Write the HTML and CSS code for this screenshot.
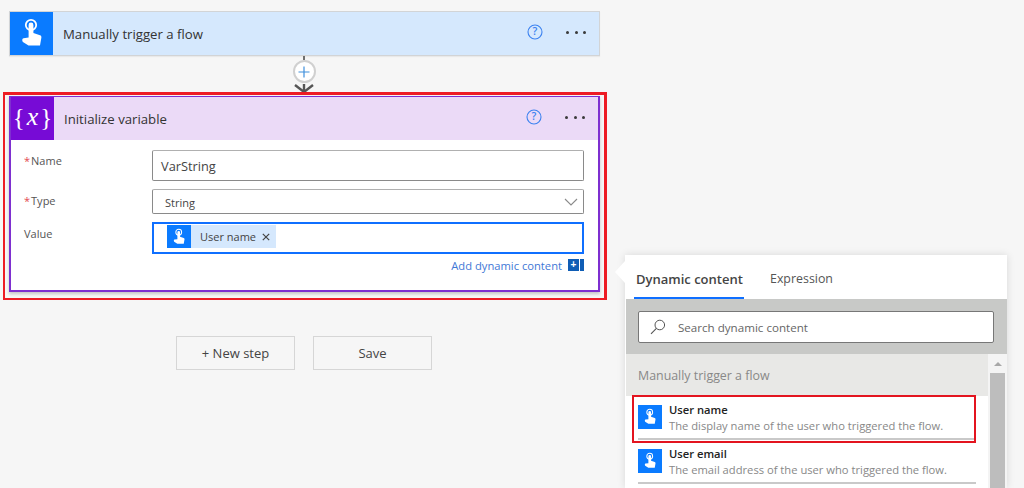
FILE: index.html
```html
<!DOCTYPE html>
<html lang="en">
<head>
<meta charset="utf-8">
<title>Initialize variable</title>
<link rel="stylesheet" href="styles.css">
</head>
<body>
<svg class="defs" width="0" height="0" aria-hidden="true">
  <symbol id="touch" viewBox="0 0 43 43">
    <circle cx="21" cy="13" r="5.2" fill="none" stroke="#fff" stroke-width="1.8"/>
    <path d="M18.6 13a2.4 2.4 0 0 1 4.8 0v8l6.6 2.2c1 .4 1.5 1.1 1.4 2.2L30 33.5H18.5l-5.6-3.6c-1-1-.9-3.3.6-3.7l5.1-.7z" fill="#fff"/>
  </symbol>
</svg>
<main class="canvas">
  <section class="card trigger">
    <header class="card-head">
      <span class="tile tile-blue"><svg class="tile-icon"><use href="#touch"/></svg></span>
      <h2 class="card-title">Manually trigger a flow</h2>
      <svg class="help" viewBox="0 0 16 16"><circle cx="8" cy="8" r="7" fill="none" stroke="#3c82f0" stroke-width="1.1"/><text x="8" y="11.4" text-anchor="middle" class="help-q">?</text></svg>
      <span class="more"><i></i><i></i><i></i></span>
    </header>
  </section>

  <div class="connector">
    <span class="stem"></span>
    <span class="plus"><svg viewBox="0 0 12 12" width="12" height="12"><path d="M6 .5v11M.5 6h11" stroke="#3f8fdc" stroke-width="1.2" fill="none"/></svg></span>
    <svg class="arrow" viewBox="0 0 20 10" width="20" height="10"><path d="M1 1l9 7 9-7M10 0v10" stroke="#555" stroke-width="2.4" fill="none"/></svg>
  </div>

  <div class="highlight">
    <section class="card variable">
      <header class="card-head head-purple">
        <span class="tile tile-purple"><span class="brace">{</span><em class="var-x">x</em><span class="brace">}</span></span>
        <h2 class="card-title">Initialize variable</h2>
        <svg class="help" viewBox="0 0 16 16"><circle cx="8" cy="8" r="7" fill="none" stroke="#3c82f0" stroke-width="1.1"/><text x="8" y="11.4" text-anchor="middle" class="help-q">?</text></svg>
        <span class="more"><i></i><i></i><i></i></span>
      </header>
      <div class="form">
        <div class="row row-name">
          <label class="label"><b class="req">*</b>Name</label>
          <div class="field field-name">VarString</div>
        </div>
        <div class="row row-type">
          <label class="label"><b class="req">*</b>Type</label>
          <div class="field field-type"><span class="type-text">String</span>
            <svg class="chev" viewBox="0 0 14 8" width="14" height="8"><path d="M1 1l6 6 6-6" fill="none" stroke="#8a8a8a" stroke-width="1.1"/></svg>
          </div>
        </div>
        <div class="row row-value">
          <label class="label">Value</label>
          <div class="field field-value">
            <span class="token">
              <span class="token-tile"><svg class="token-icon"><use href="#touch"/></svg></span>
              <span class="token-text">User name</span>
              <svg class="token-x" viewBox="0 0 8 8" width="8" height="8"><path d="M.8.8l6.4 6.4M7.2.8L.8 7.2" stroke="#444" stroke-width="1.2"/></svg>
            </span>
          </div>
        </div>
        <div class="add-row">
          <a class="add-link">Add dynamic content</a>
          <span class="add-btn"><span class="add-plus">+</span><span class="add-gap"></span></span>
        </div>
      </div>
    </section>
  </div>

  <div class="actions">
    <button class="btn">+ New step</button>
    <button class="btn">Save</button>
  </div>

  <aside class="panel">
    <span class="beak"></span>
    <nav class="tabs">
      <span class="tab tab-on">Dynamic content</span>
      <span class="tab">Expression</span>
    </nav>
    <div class="search-band">
      <div class="search">
        <svg class="search-icon" viewBox="0 0 16 16" width="16" height="16"><circle cx="9.8" cy="6" r="4.8" fill="none" stroke="#555" stroke-width="1"/><path d="M6.4 9.4L1 14.8" stroke="#555" stroke-width="1.1"/></svg>
        <span class="search-text">Search dynamic content</span>
      </div>
    </div>
    <div class="list-wrap">
      <div class="list">
        <div class="group">Manually trigger a flow</div>
        <div class="item">
          <span class="item-tile"><svg class="token-icon"><use href="#touch"/></svg></span>
          <div class="item-body"><div class="item-title">User name</div><div class="item-desc">The display name of the user who triggered the flow.</div></div>
        </div>
        <div class="item">
          <span class="item-tile"><svg class="token-icon"><use href="#touch"/></svg></span>
          <div class="item-body"><div class="item-title">User email</div><div class="item-desc">The email address of the user who triggered the flow.</div></div>
        </div>
        <span class="item-mark"></span>
      </div>
      <div class="scrollbar"><span class="scroll-up"></span><span class="scroll-thumb"></span></div>
    </div>
  </aside>
</main>
</body>
</html>
```
FILE: styles.css
```css
* { box-sizing: border-box; }
html, body { margin: 0; height: 100%; }
body {
  background: #f6f6f6;
  font-family: "Open Sans", "Noto Sans", sans-serif;
  color: #333;
  overflow: hidden;
}
.defs { position: absolute; }
.canvas {
  position: relative;
  height: 488px;
  padding-top: 11px;
  display: flex;
  flex-direction: column;
  align-items: flex-start;
}
.card { background: #fff; }
.trigger {
  margin-left: 9px;
  width: 591px;
  height: 45px;
  border: 1px solid #d2d4d6;
  box-shadow: 0 1px 1px rgba(0,0,0,.05);
}
.card-head {
  height: 43px;
  background: #d5e8fd;
  display: flex;
  align-items: center;
}
.head-purple { background: #ebdaf7; }
.tile {
  width: 43px;
  height: 43px;
  flex: none;
  display: flex;
  align-items: center;
  justify-content: center;
  color: #fff;
}
.tile-blue { background: #0a7bff; }
.tile-purple { background: #770bd6; }
.tile-icon { width: 43px; height: 43px; }
.brace { font: 25px/1 "Liberation Serif", serif; margin-top: -2px; }
.var-x { font: italic 26px/1 "Liberation Serif", serif; margin: -4px 2px 0; }
.card-title {
  margin: 0 0 0 10px;
  flex: 1;
  font-size: 13.2px;
  font-weight: 400;
  color: #333;
}
.help { width: 16px; height: 16px; flex: none; margin: -3px 0 0; }
.help-q { font: 600 10.5px "Open Sans", sans-serif; fill: #3c82f0; }
.more {
  display: flex;
  gap: 5.5px;
  margin: -2px 13px 0 23px;
  flex: none;
}
.more i { width: 3px; height: 3px; border-radius: 50%; background: #3a3a3a; }
.connector {
  position: relative;
  margin-left: 293px;
  width: 22px;
  height: 36px;
  display: flex;
  flex-direction: column;
  align-items: center;
}
.stem { width: 2px; height: 4px; background: #6f6f6f; flex: none; }
.plus {
  width: 23px;
  height: 23px;
  flex: none;
  border: 2px solid #d0d0d0;
  border-radius: 50%;
  background: #fff;
  display: flex;
  align-items: center;
  justify-content: center;
}
.arrow { flex: none; margin-top: 1px; }
.highlight {
  margin-left: 3px;
  width: 604px;
  height: 208px;
  border: 3px solid #ed1c24;
  border-left-width: 2px;
  border-bottom-width: 2px;
  padding: 1px 3px 4px 3px;
  position: relative;
}
.variable {
  width: 591px;
  height: 196px;
  margin-left: 1px;
  border: 2px solid #7e2fd0;
  border-top-width: 1px;
  box-shadow: 0 2px 3px rgba(0,0,0,.2);
}
.form {
  position: relative;
  padding: 10px 14px 0 13px;
  display: flex;
  flex-direction: column;
}
.row { display: flex; align-items: flex-start; }
.label {
  width: 128px;
  flex: none;
  font-size: 11px;
  color: #555;
  padding-top: 3px;
}
.req { color: #e34850; font-weight: 400; margin-right: 1px; }
.field {
  flex: 1;
  background: #fff;
  border: 1px solid #8a8a8a;
  border-top-color: #b0b0b0;
  border-radius: 2px;
  display: flex;
  align-items: center;
}
.row-name { height: 39px; }
.row-name .field { height: 31px; padding-left: 8px; font-size: 12.8px; color: #444; }
.row-type { height: 33px; }
.row-type .field { height: 25px; padding: 0 5px 0 12px; font-size: 11px; color: #444; justify-content: space-between; }
.type-text { padding-top: 1px; }
.row-type .label { padding-top: 4px; }
.row-value { height: 32px; }
.row-value .label { padding-top: 4px; }
.field-value {
  height: 32px;
  border: 2px solid #0f6fff;
  border-radius: 0;
  padding-left: 13px;
  align-items: flex-start;
  padding-top: 1px;
}
.token {
  display: flex;
  align-items: center;
  height: 23px;
  width: 109px;
  background: #d5e8fd;
}
.token-tile, .item-tile {
  background: #0a7bff;
  flex: none;
  display: flex;
  align-items: center;
  justify-content: center;
}
.token-tile { width: 24px; height: 23px; }
.token-icon { width: 24px; height: 24px; }
.token-text { font-size: 11px; color: #444; margin-left: 9px; white-space: nowrap; }
.token-x { margin-left: 6px; }
.add-row {
  display: flex;
  justify-content: flex-end;
  align-items: center;
  gap: 6px;
  margin-top: 3px;
  height: 16px;
  margin-right: 0;
}
.add-link { font-size: 11.2px; color: #3f78d6; }
.add-btn {
  width: 16px;
  height: 12px;
  background: #0f5db5;
  display: flex;
}
.add-plus {
  width: 11px;
  color: #fff;
  font: 700 10px/12px "Liberation Sans", sans-serif;
  text-align: center;
}
.add-gap { width: 1px; background: #fff; }
.actions {
  display: flex;
  gap: 18px;
  margin: 36px 0 0 176px;
}
.btn {
  width: 119px;
  height: 34px;
  background: #f6f6f6;
  border: 1px solid #d6d6d6;
  font-family: inherit;
  font-size: 13px;
  color: #444;
  padding: 0;
}
.panel {
  position: absolute;
  left: 625px;
  top: 255px;
  width: 382px;
  height: 233px;
  background: #fff;
  box-shadow: 0 0 8px rgba(0,0,0,.12);
  display: flex;
  flex-direction: column;
}
.beak {
  position: absolute;
  left: -10px;
  top: 6px;
  width: 0;
  height: 0;
  border-top: 11px solid transparent;
  border-bottom: 11px solid transparent;
  border-right: 10px solid #fff;
}
.tabs {
  height: 44px;
  display: flex;
  padding-left: 9px;
  gap: 24px;
  flex: none;
}
.tab {
  font-size: 12.4px;
  line-height: 48px;
  color: #555;
  padding: 0 2px;
  height: 44px;
}
.tab-on { font-size: 13px; font-weight: 600; color: #444; border-bottom: 2px solid #0f6fff; width: 110px; white-space: nowrap; }
.search-band {
  height: 55px;
  flex: none;
  margin-left: 1px;
  background: #c8c9c7;
  padding: 12px 13px 0 12px;
}
.search {
  height: 32px;
  background: #fff;
  border: 1px solid #777;
  border-radius: 2px;
  display: flex;
  align-items: center;
  padding-left: 11px;
}
.search-text { font-size: 11.6px; color: #666; margin-left: 12px; }
.list-wrap { flex: 1; display: flex; margin-left: 1px; min-height: 0; }
.list { flex: 1; position: relative; overflow: hidden; }
.group {
  height: 42px;
  background: #e8e8e6;
  font-size: 12.4px;
  line-height: 43px;
  padding-left: 12px;
  color: #888;
}
.item {
  margin: 0 12px;
  height: 44px;
  padding-top: 9px;
  display: flex;
  gap: 7px;
  border-bottom: 2px solid #c9c9c9;
}
.item-tile { width: 24px; height: 24px; }
.item-body { margin-top: -3px; }
.item-title { font-size: 11.2px; font-weight: 600; color: #222; line-height: 15.5px; }
.item-desc { font-size: 11.2px; color: #888; line-height: 16px; white-space: nowrap; }
.item-mark {
  position: absolute;
  left: 6px;
  top: 41px;
  width: 344px;
  height: 48px;
  border: 2px solid #e3141f;
}
.scrollbar {
  width: 19px;
  flex: none;
  background: #f4f4f4;
  display: flex;
  flex-direction: column;
  align-items: center;
}
.scroll-up {
  margin-top: 8px;
  width: 0;
  height: 0;
  border-left: 4px solid transparent;
  border-right: 4px solid transparent;
  border-bottom: 4px solid #a8a8a8;
}
.scroll-thumb { margin-top: 7px; width: 15px; flex: 1; background: #bdbdbd; }
```
